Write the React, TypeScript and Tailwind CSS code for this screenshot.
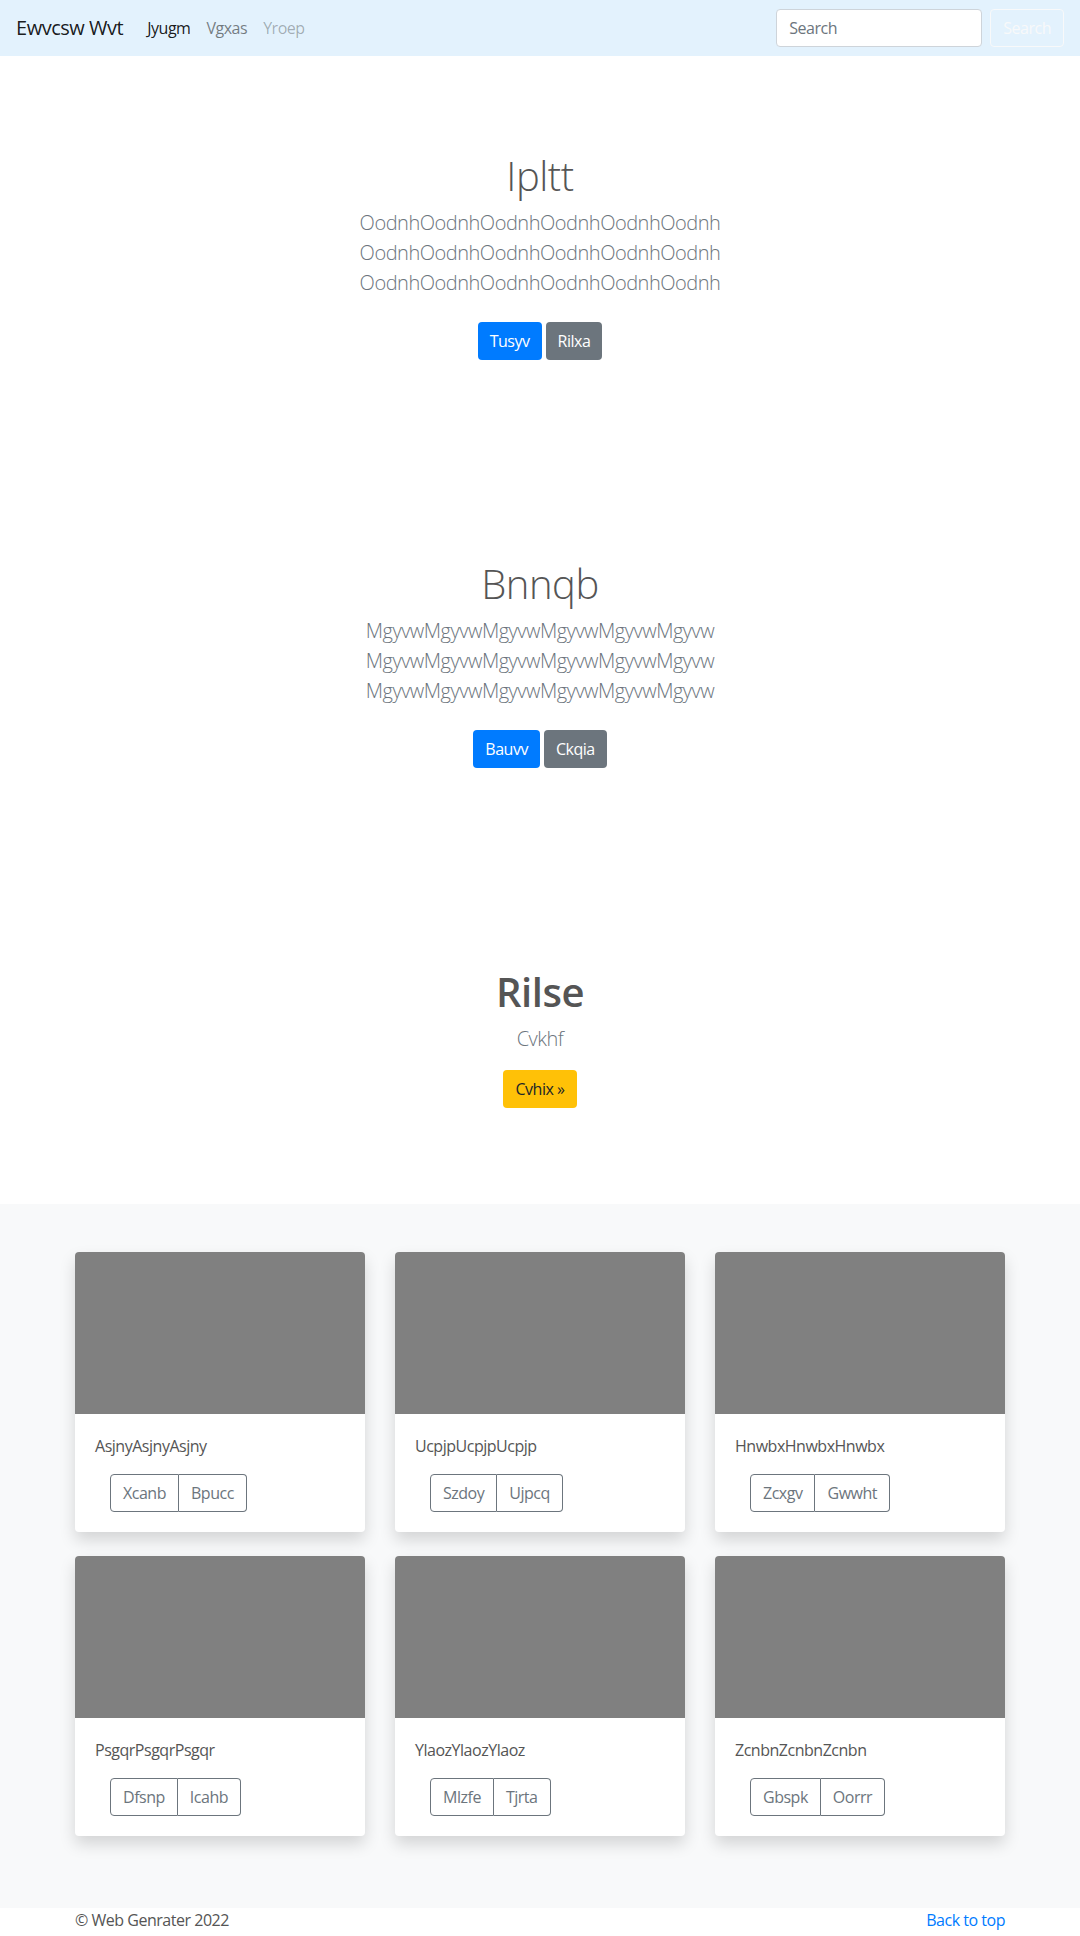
import React from 'react';

const font = "font-['Open_Sans','Noto_Sans',sans-serif] tracking-[-0.03em]";

const heroes = [
  {
    title: 'Ipltt',
    line: 'OodnhOodnhOodnhOodnhOodnhOodnh',
    primary: 'Tusyv',
    secondary: 'Rilxa',
  },
  {
    title: 'Bnnqb',
    line: 'MgyvwMgyvwMgyvwMgyvwMgyvwMgyvw',
    primary: 'Bauvv',
    secondary: 'Ckqia',
  },
];

const cards = [
  { text: 'AsjnyAsjnyAsjny', a: 'Xcanb', b: 'Bpucc' },
  { text: 'UcpjpUcpjpUcpjp', a: 'Szdoy', b: 'Ujpcq' },
  { text: 'HnwbxHnwbxHnwbx', a: 'Zcxgv', b: 'Gwwht' },
  { text: 'PsgqrPsgqrPsgqr', a: 'Dfsnp', b: 'Icahb' },
  { text: 'YlaozYlaozYlaoz', a: 'Mlzfe', b: 'Tjrta' },
  { text: 'ZcnbnZcnbnZcnbn', a: 'Gbspk', b: 'Oorrr' },
];

const Navbar = () => (
  <nav className="h-14 bg-[#e3f2fd] px-4 flex items-center justify-between">
    <div className="flex items-center">
      <span className="text-[20px] leading-[30px] text-black/90 mr-4">Ewvcsw Wvt</span>
      <span className="px-2 text-black/90">Jyugm</span>
      <span className="px-2 text-black/50">Vgxas</span>
      <span className="px-2 text-black/30">Yroep</span>
    </div>
    <div className="flex items-center gap-2">
      <input
        placeholder="Search"
        className="w-[206px] h-[38px] px-3 bg-white border border-[#ced4da] rounded text-base placeholder:text-[#6c757d] outline-none"
      />
      <button className="h-[38px] px-3 border border-[#f8f9fa] rounded text-[#f8f9fa]">Search</button>
    </div>
  </nav>
);

const Hero = ({ title, line, primary, secondary }: (typeof heroes)[number]) => (
  <section className="py-24 text-center">
    <h1 className="text-[40px] leading-[48px] font-light mb-2">{title}</h1>
    <p className="text-[20px] leading-[30px] font-light text-[#6c757d] mb-4">
      {line}
      <br />
      {line}
      <br />
      {line}
    </p>
    <div className="flex justify-center gap-1 py-2">
      <button className="h-[38px] px-3 rounded bg-[#007bff] text-white">{primary}</button>
      <button className="h-[38px] px-3 rounded bg-[#6c757d] text-white">{secondary}</button>
    </div>
  </section>
);

export default function App() {
  return (
    <div className={`${font} text-[#555] text-base leading-6 bg-white`}>
      <Navbar />
      {heroes.map(h => (
        <Hero key={h.title} {...h} />
      ))}

      <section className="pt-24 pb-24 text-center">
        <h1 className="text-[40px] leading-[48px] font-semibold mb-2">Rilse</h1>
        <p className="text-[20px] leading-[30px] font-light text-[#6c757d] mb-4">Cvkhf</p>
        <button className="h-[38px] px-3 rounded bg-[#ffc107] text-[#212529]">Cvhix »</button>
      </section>

      <section className="bg-[#f8f9fa] pt-12 pb-[72px]">
        <div className="w-[930px] mx-auto grid grid-cols-3 gap-x-[30px] gap-y-6">
          {cards.map(c => (
            <div key={c.text} className="bg-white rounded overflow-hidden shadow-[0_8px_16px_rgba(0,0,0,0.15)]">
              <div className="h-[162px] bg-[#808080]" />
              <div className="p-5">
                <p className="mb-4">{c.text}</p>
                <div className="flex ml-[15px]">
                  <button className="h-[38px] px-3 border border-[#6c757d] rounded-l text-[#6c757d]">{c.a}</button>
                  <button className="h-[38px] px-3 border border-l-0 border-[#6c757d] rounded-r text-[#6c757d]">{c.b}</button>
                </div>
              </div>
            </div>
          ))}
        </div>
      </section>

      <footer className="w-[930px] mx-auto pb-12 flex justify-between">
        <span>© Web Genrater 2022</span>
        <span className="text-[#007bff]">Back to top</span>
      </footer>
    </div>
  );
}
